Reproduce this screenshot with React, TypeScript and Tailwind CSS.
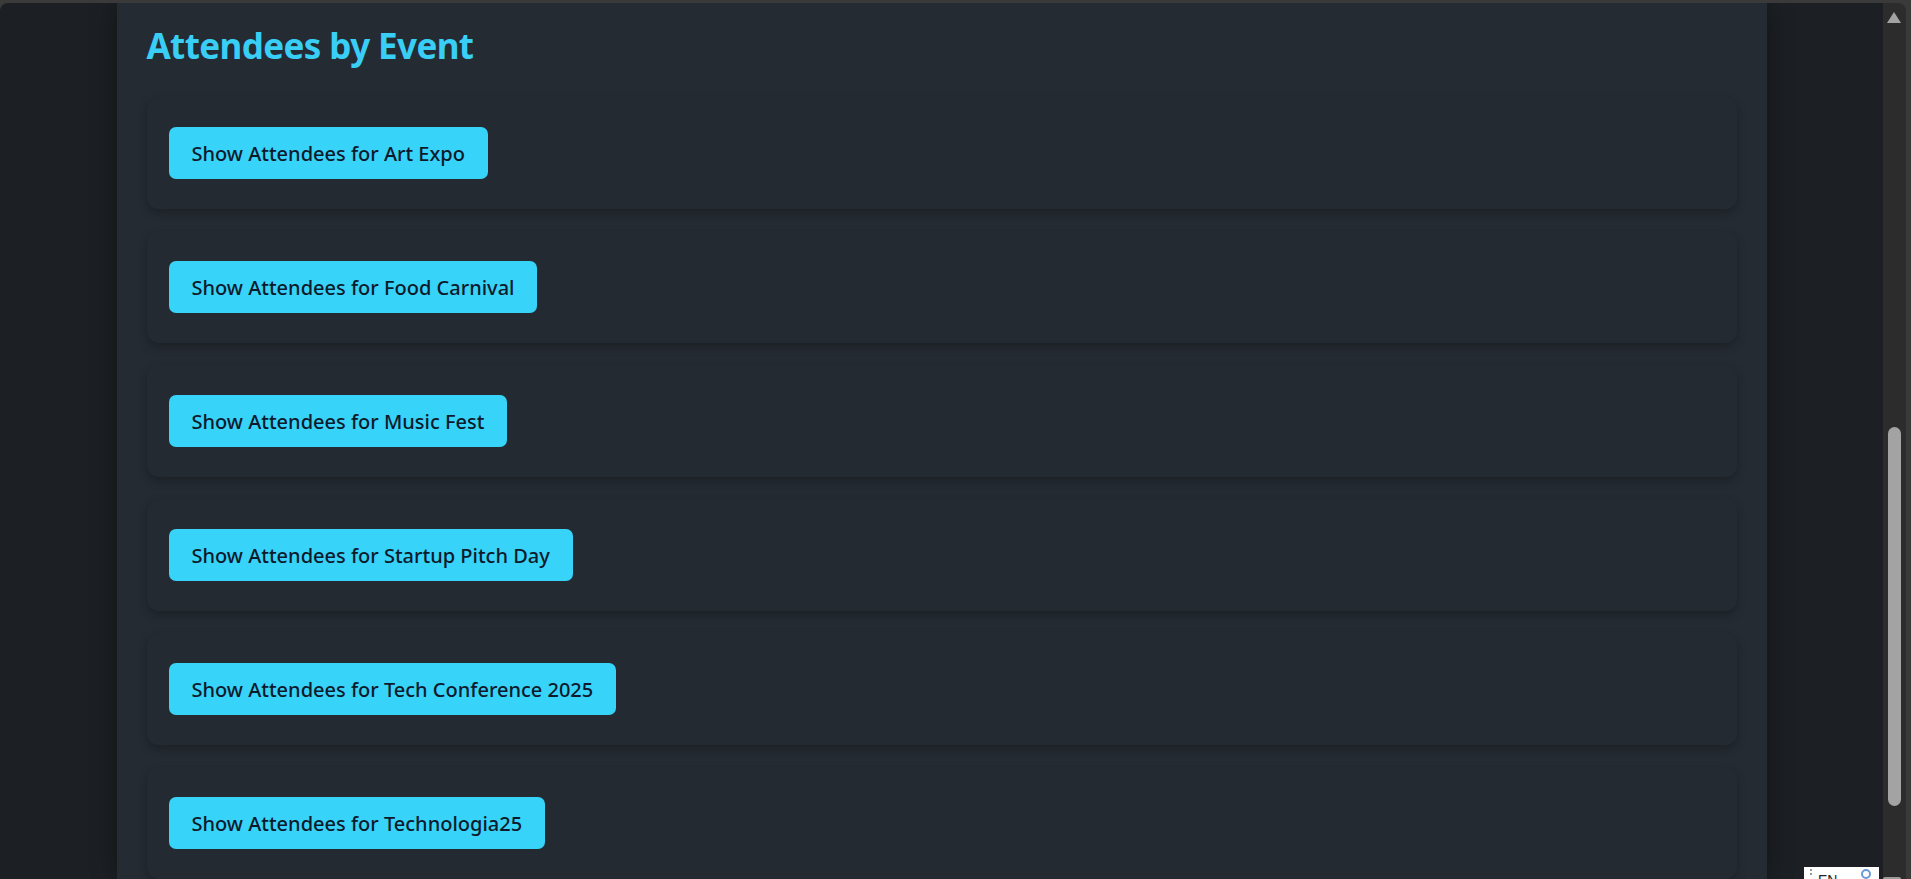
import React from "react";

const events = [
  "Art Expo",
  "Food Carnival",
  "Music Fest",
  "Startup Pitch Day",
  "Tech Conference 2025",
  "Technologia25",
];

export default function App() {
  return (
    <div
      className="relative w-[1911px] h-[879px] overflow-hidden bg-[#3a3a3a] flex flex-col"
      style={{ fontFamily: '"Noto Sans", "Open Sans", sans-serif' }}
    >
      <div className="h-[3px] shrink-0" />
      <div className="flex flex-1 min-h-0 pr-[5px]">
        <div className="flex-1 min-w-0 bg-[#1c1f23] rounded-tl-[8px] overflow-hidden flex justify-center">
          <div className="w-[1650px] shrink-0 bg-[#252b33] px-[30px] pt-[20px] shadow-[0_0_24px_rgba(0,0,0,0.35)]">
            <h2 className="text-[35px] leading-[45px] font-bold text-[#38cef6] tracking-[-0.6px]">
              Attendees by Event
            </h2>
            <div className="mt-[29px] flex flex-col gap-[22px]">
              {events.map((e) => (
                <div
                  key={e}
                  className="bg-[#242a32] rounded-[12px] pl-[22px] pr-[30px] py-[30px] shadow-[0_4px_10px_rgba(0,0,0,0.25)]"
                >
                  <button className="h-[52px] px-[23px] pt-[2px] rounded-[7px] bg-[#37d3f9] text-[#0e1a2b] text-[20px] leading-[50px] font-medium">
                    Show Attendees for {e}
                  </button>
                </div>
              ))}
            </div>
          </div>
        </div>
        <div className="w-[23px] shrink-0 bg-[#2c2c2c] rounded-tr-[8px] relative">
          <div className="absolute left-[4px] top-[9px] w-0 h-0 border-l-[7px] border-r-[7px] border-b-[11px] border-l-transparent border-r-transparent border-b-[#a3a3a3]" />
          <div className="absolute left-[5px] top-[424px] w-[13px] h-[379px] rounded-full bg-[#a3a3a3]" />
          <div className="absolute left-0 top-[874px] w-[18px] h-[5px] bg-[#9a9a9a] rounded-t-[2px]" />
        </div>
      </div>
      <div
        className="absolute left-[1804px] top-[867px] w-[75px] h-[14px] bg-white flex items-start pl-[6px] gap-[6px]"
        style={{ fontFamily: '"Liberation Sans", sans-serif' }}
      >
        <div className="flex flex-col gap-[2px] pt-[2px]">
          <div className="w-[2px] h-[2px] bg-[#999]" />
          <div className="w-[2px] h-[2px] bg-[#999]" />
        </div>
        <span className="text-[14px] leading-[14px] text-[#222] pt-[6px]">EN</span>
        <div className="ml-auto mr-[8px] mt-[2px] w-[10px] h-[10px] rounded-full border-[2px] border-[#6a9ad8]" />
      </div>
    </div>
  );
}
